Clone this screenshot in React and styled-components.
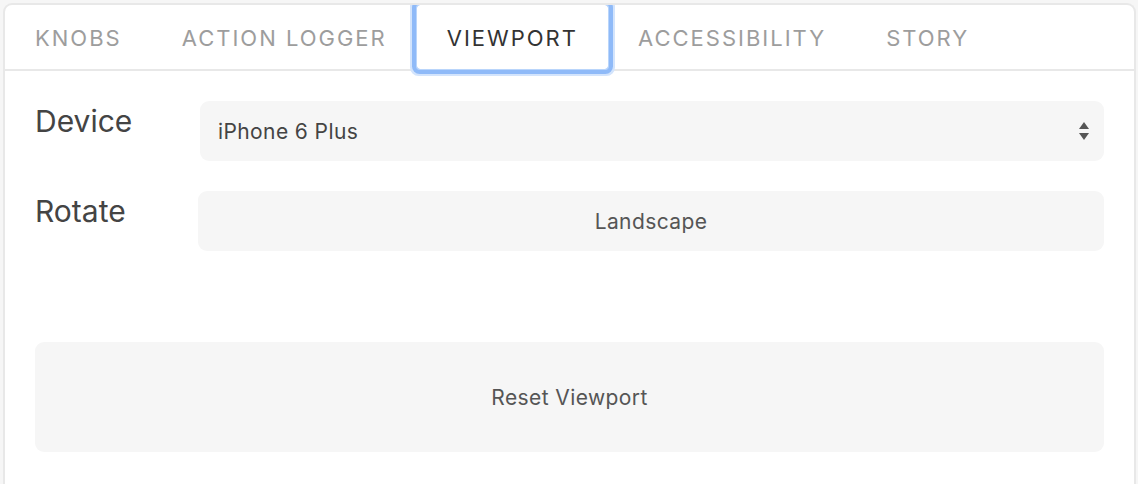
import React, { useState } from "react";
import styled, { createGlobalStyle } from "styled-components";

const Global = createGlobalStyle`
  html, body { margin: 0; padding: 0; background: #f6f6f6; }
  body { font-family: Inter, "Noto Sans", "Liberation Sans", sans-serif; -webkit-font-smoothing: antialiased; }
  * { box-sizing: border-box; }
`;

const Page = styled.div`
  padding: 3px 2px 0 3px;
  height: 484px;
  overflow: hidden;
`;

const Panel = styled.div`
  background: #ffffff;
  border: 2px solid #e8e8e8;
  border-bottom: none;
  border-radius: 9px 9px 0 0;
  height: 520px;
  overflow: hidden;
  display: flex;
  flex-direction: column;
`;

const TabBar = styled.div`
  display: flex;
  height: 66px;
  border-bottom: 2px solid #e8e8e8;
  flex-shrink: 0;
`;

const Tab = styled.button`
  appearance: none;
  border: none;
  background: transparent;
  margin: 0;
  padding: 2px 30px 0 30px;
  height: 64px;
  font-family: inherit;
  font-size: 22px;
  font-weight: 400;
  letter-spacing: 2px;
  text-transform: uppercase;
  color: ${(p) => (p.$active ? "#333333" : "#9d9d9d")};
  cursor: pointer;
  position: relative;
  border-radius: 3px;
  ${(p) =>
    p.$focused
      ? `box-shadow: 0 0 0 1px #b9d5fb, 0 0 0 5px #8fbaf8, 0 0 0 7px #d3e4fc; z-index: 1;`
      : ""}
  &:focus { outline: none; }
`;

const Content = styled.div`
  padding: 30px 30px 0 30px;
  display: flex;
  flex-direction: column;
`;

const Row = styled.div`
  display: flex;
  align-items: flex-start;
  margin-bottom: 30px;
`;

const Label = styled.div`
  width: ${(p) => p.$w}px;
  flex-shrink: 0;
  font-size: 30px;
  line-height: 36px;
  color: #444444;
  padding-top: 2px;
`;

const SelectWrap = styled.div`
  flex: 1;
  height: 60px;
  background: #f6f6f6;
  border-radius: 9px;
  display: flex;
  align-items: center;
  padding: 0 14px 0 18px;
`;

const SelectText = styled.span`
  flex: 1;
  font-size: 21px;
  color: #444444;
  letter-spacing: 0.4px;
`;

const Arrows = styled.svg`
  width: 12px;
  height: 22px;
  display: block;
`;

const Button = styled.button`
  appearance: none;
  border: none;
  margin: 0;
  flex: ${(p) => (p.$grow ? "1 1 auto" : "none")};
  width: 100%;
  height: ${(p) => p.$h}px;
  background: #f6f6f6;
  border-radius: 9px;
  font-family: inherit;
  font-size: 21px;
  color: #555555;
  letter-spacing: 0.4px;
  cursor: pointer;
`;

const Spacer = styled.div`
  height: 61px;
  flex: none;
`;

const tabs = ["Knobs", "Action Logger", "Viewport", "Accessibility", "Story"];

export default function App() {
  const [active] = useState("Viewport");
  return (
    <>
      <Global />
      <Page>
        <Panel>
          <TabBar>
            {tabs.map((t) => (
              <Tab key={t} $active={t === active} $focused={t === active}>
                {t}
              </Tab>
            ))}
          </TabBar>
          <Content>
            <Row>
              <Label $w={165}>Device</Label>
              <SelectWrap>
                <SelectText>iPhone 6 Plus</SelectText>
                <Arrows viewBox="0 0 12 22">
                  <path d="M6 2 L11 9 L1 9 Z" fill="#555" />
                  <path d="M1 13 L11 13 L6 20 Z" fill="#555" />
                </Arrows>
              </SelectWrap>
            </Row>
            <Row>
              <Label $w={163}>Rotate</Label>
              <Button $grow $h={60}>Landscape</Button>
            </Row>
            <Spacer />
            <Button $h={110}>Reset Viewport</Button>
          </Content>
        </Panel>
      </Page>
    </>
  );
}
